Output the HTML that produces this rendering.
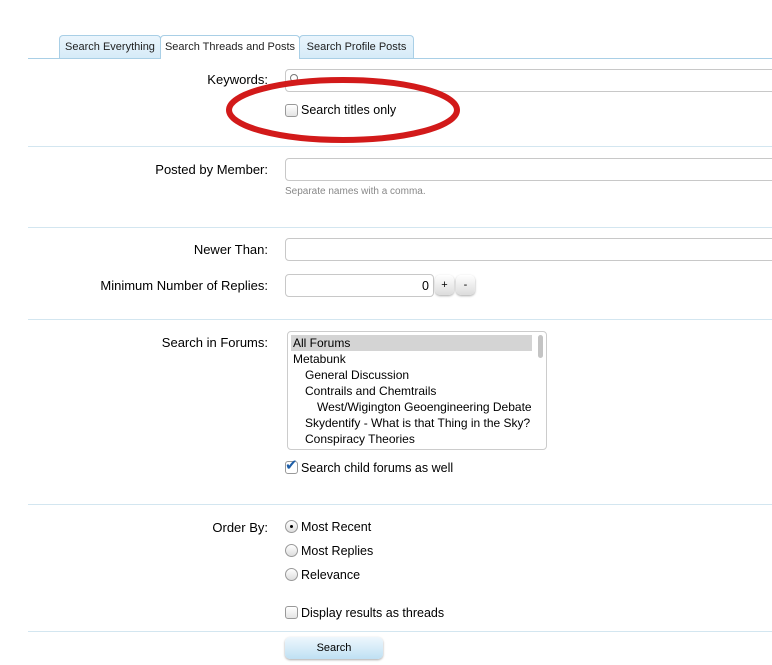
<!DOCTYPE html>
<html><head><style>
body{margin:0;width:772px;height:665px;background:#fff;font-family:"Liberation Sans",sans-serif;font-size:12px;color:#000;position:relative;overflow:hidden}
.a{position:absolute}
.hr{position:absolute;left:28px;right:0;height:1px;background:#d3e6f0}
.tab{position:absolute;top:35px;height:22px;border:1px solid #a9cfe6;border-bottom:none;border-radius:4px 4px 0 0;background:linear-gradient(#eaf5fc,#d6ebf8);font-size:11px;line-height:22px;text-align:center;color:#222;white-space:nowrap}
.lbl{position:absolute;right:504px;font-size:13px;white-space:nowrap}
.in{position:absolute;border:1px solid #c8c8c8;border-radius:4px;background:#fff;box-sizing:border-box}
.cb{position:absolute;width:11px;height:11px;border:1px solid #999;border-radius:3px;background:linear-gradient(#fff,#e4e4e4)}
.rd{position:absolute;width:11px;height:11px;border:1px solid #999;border-radius:50%;background:linear-gradient(#fff,#ddd)}
.t{position:absolute;font-size:12.5px;white-space:nowrap}
.l{font-size:12px}
.btn{position:absolute;border-radius:5px;background:linear-gradient(#fff,#dcdcdc);box-shadow:0 1px 2px #aaa;text-align:center;font-size:11px}
</style></head><body>
<div class="hr" style="top:58px;background:#a9cfe6;left:28px"></div>
<div class="tab" style="left:59px;width:100px">Search Everything</div>
<div class="tab" style="left:160px;width:138px;background:#fff;height:23px">Search Threads and Posts</div>
<div class="tab" style="left:299px;width:113px">Search Profile Posts</div>

<div class="lbl" style="top:72px">Keywords:</div>
<div class="in" style="left:285px;top:69px;width:500px;height:23px"></div>
<div class="a" style="left:290px;top:74px;width:6px;height:6px;border:1px solid #777;border-radius:50%"></div>
<div class="cb" style="left:285px;top:104px"></div>
<div class="t" style="left:301px;top:103px">Search titles only</div>
<svg class="a" style="left:225px;top:75px" width="240" height="72"><ellipse cx="118" cy="35" rx="114" ry="30" fill="none" stroke="#d21a1a" stroke-width="6"/></svg>
<div class="hr" style="top:146px"></div>

<div class="lbl" style="top:162px">Posted by Member:</div>
<div class="in" style="left:285px;top:158px;width:500px;height:23px"></div>
<div class="t" style="left:285px;top:186px;font-size:10px;color:#888">Separate names with a comma.</div>
<div class="hr" style="top:227px"></div>

<div class="lbl" style="top:242px">Newer Than:</div>
<div class="in" style="left:285px;top:238px;width:500px;height:23px"></div>
<div class="lbl" style="top:278px">Minimum Number of Replies:</div>
<div class="in" style="left:285px;top:274px;width:149px;height:23px"></div>
<div class="t" style="left:422px;top:279px">0</div>
<div class="btn" style="left:435px;top:275px;width:19px;height:20px;line-height:20px">+</div>
<div class="btn" style="left:456px;top:275px;width:19px;height:20px;line-height:20px">-</div>
<div class="hr" style="top:319px"></div>

<div class="lbl" style="top:335px">Search in Forums:</div>
<div class="in" style="left:287px;top:331px;width:260px;height:119px;border-color:#ccc"></div>
<div class="a" style="left:291px;top:335px;width:241px;height:16px;background:#d4d4d4"></div>
<div class="a" style="left:538px;top:335px;width:5px;height:23px;background:#c4c4c4;border-radius:3px"></div>
<div class="t l" style="left:293px;top:336px">All Forums</div>
<div class="t l" style="left:293px;top:352px">Metabunk</div>
<div class="t l" style="left:305px;top:368px">General Discussion</div>
<div class="t l" style="left:305px;top:384px">Contrails and Chemtrails</div>
<div class="t l" style="left:317px;top:400px">West/Wigington Geoengineering Debate</div>
<div class="t l" style="left:305px;top:416px">Skydentify - What is that Thing in the Sky?</div>
<div class="t l" style="left:305px;top:432px">Conspiracy Theories</div>
<div class="cb" style="left:285px;top:461px;background:#fff"></div>
<div class="t" style="left:285px;top:456px;color:#1f5fa8;font-size:15px">✔</div>
<div class="t" style="left:301px;top:461px">Search child forums as well</div>
<div class="hr" style="top:504px"></div>

<div class="lbl" style="top:520px">Order By:</div>
<div class="rd" style="left:285px;top:520px"></div>
<div class="a" style="left:290px;top:525px;width:3px;height:3px;background:#000;border-radius:50%"></div>
<div class="t" style="left:301px;top:520px">Most Recent</div>
<div class="rd" style="left:285px;top:544px"></div>
<div class="t" style="left:301px;top:544px">Most Replies</div>
<div class="rd" style="left:285px;top:568px"></div>
<div class="t" style="left:301px;top:568px">Relevance</div>
<div class="cb" style="left:285px;top:606px"></div>
<div class="t" style="left:301px;top:606px">Display results as threads</div>
<div class="hr" style="top:631px"></div>
<div class="btn" style="left:285px;top:637px;width:98px;height:22px;line-height:22px;background:linear-gradient(#eef7fd,#bfe0f3)">Search</div>
</body></html>
